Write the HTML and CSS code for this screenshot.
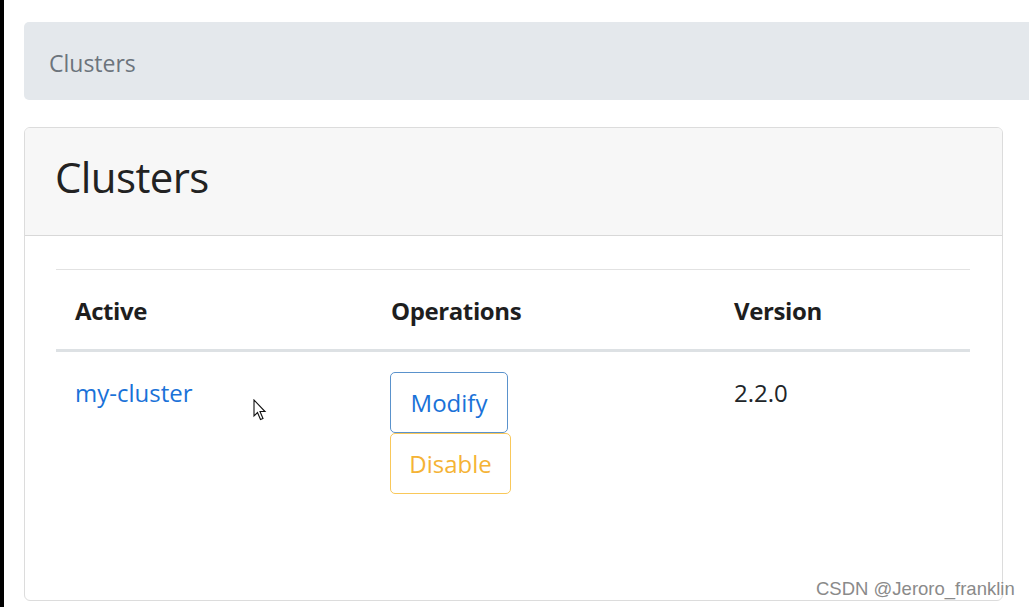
FILE: index.html
```html
<!DOCTYPE html>
<html>
<head>
<meta charset="utf-8">
<link rel="stylesheet" href="styles.css">
</head>
<body>
<div class="screen">
  <div class="strip"></div>
  <div class="main">
    <nav class="breadcrumb"><span class="crumb">Clusters</span></nav>
    <section class="card">
      <header class="card-header"><h1 class="title">Clusters</h1></header>
      <div class="card-body">
        <table class="table">
          <colgroup><col class="c1"><col class="c2"><col class="c3"></colgroup>
          <thead>
            <tr><th>Active</th><th>Operations</th><th>Version</th></tr>
          </thead>
          <tbody>
            <tr>
              <td><a class="link" href="#">my-cluster</a></td>
              <td class="ops">
                <button class="btn btn-modify">Modify</button>
                <button class="btn btn-disable">Disable</button>
              </td>
              <td>2.2.0</td>
            </tr>
          </tbody>
        </table>
      </div>
    </section>
  </div>
  <svg class="cursor" width="14" height="23" viewBox="0 0 14 23">
    <path d="M1 1 L1 17 L4.5 13.5 L7.5 20.5 L10 19.5 L7 12.5 L12 12.5 Z" fill="#fff" stroke="#111" stroke-width="1.1" stroke-linejoin="miter"/>
  </svg>
  <div class="watermark">CSDN @Jeroro_franklin</div>
</div>
</body>
</html>
```
FILE: styles.css
```css
html, body {
  margin: 0;
  padding: 0;
  background: #fff;
}
.screen {
  position: relative;
  width: 1029px;
  height: 607px;
  overflow: hidden;
  display: flex;
  font-family: "Open Sans", "Noto Sans", sans-serif;
  color: #212529;
}
.strip {
  width: 4px;
  flex: none;
  background: #000;
}
.main {
  flex: 1;
  padding: 22px 0 0 20px;
  display: flex;
  flex-direction: column;
}
.breadcrumb {
  height: 78px;
  margin-right: -20px;
  background: #e4e8ec;
  border-radius: 5px;
  display: flex;
  align-items: center;
  padding: 4px 0 0 25px;
  box-sizing: border-box;
}
.crumb {
  font-size: 23px;
  color: #6c747c;
}
.card {
  margin-top: 27px;
  width: 979px;
  height: 474px;
  box-sizing: border-box;
  border: 1px solid #dcdcdc;
  border-radius: 6px;
  overflow: hidden;
}
.card-header {
  height: 108px;
  box-sizing: border-box;
  background: #f7f7f7;
  border-bottom: 1px solid #d8d8d8;
  display: flex;
  align-items: center;
  padding: 0 0 10px 30px;
}
.title {
  margin: 0;
  font-size: 42px;
  font-weight: 400;
  letter-spacing: -0.6px;
  color: #222;
}
.card-body {
  padding: 33px 31px 0 31px;
}
.table {
  width: 914px;
  border-collapse: collapse;
  table-layout: fixed;
}
.c1 { width: 316px; }
.c2 { width: 343px; }
.c3 { width: 255px; }
.table th {
  text-align: left;
  font-size: 24px;
  font-weight: 700;
  height: 78px;
  padding: 1px 0 0 19px;
  border-top: 1px solid #e2e2e2;
  border-bottom: 3px solid #dde1e4;
  letter-spacing: -0.4px;
  color: #1e1e1e;
}
.table td {
  vertical-align: top;
  padding: 21px 0 0 19px;
  font-size: 24px;
  line-height: 40px;
}
.link {
  color: #1a72d8;
  text-decoration: none;
}
.ops {
  display: flex;
  flex-direction: column;
  align-items: flex-start;
}
.table td.ops { padding: 20px 0 0 18px; }
.btn {
  font-family: inherit;
  font-size: 24px;
  background: #fff;
  border-radius: 5px;
  height: 61px;
  padding: 0 10px;
  margin: 0;
  line-height: 1;
}
.btn-modify {
  width: 118px;
  color: #1a72d8;
  border: 1.5px solid #5a92cc;
}
.btn-disable {
  width: 121px;
  color: #f5b335;
  border: 1.5px solid #f9c85a;
}
.cursor {
  position: absolute;
  left: 253px;
  top: 399px;
}
.watermark {
  position: absolute;
  left: 816px;
  top: 578px;
  font-family: "Liberation Sans", Arial, sans-serif;
  font-size: 18.5px;
  color: #8a8a8a;
  text-shadow: 0 0 2px #fff;
}
```
